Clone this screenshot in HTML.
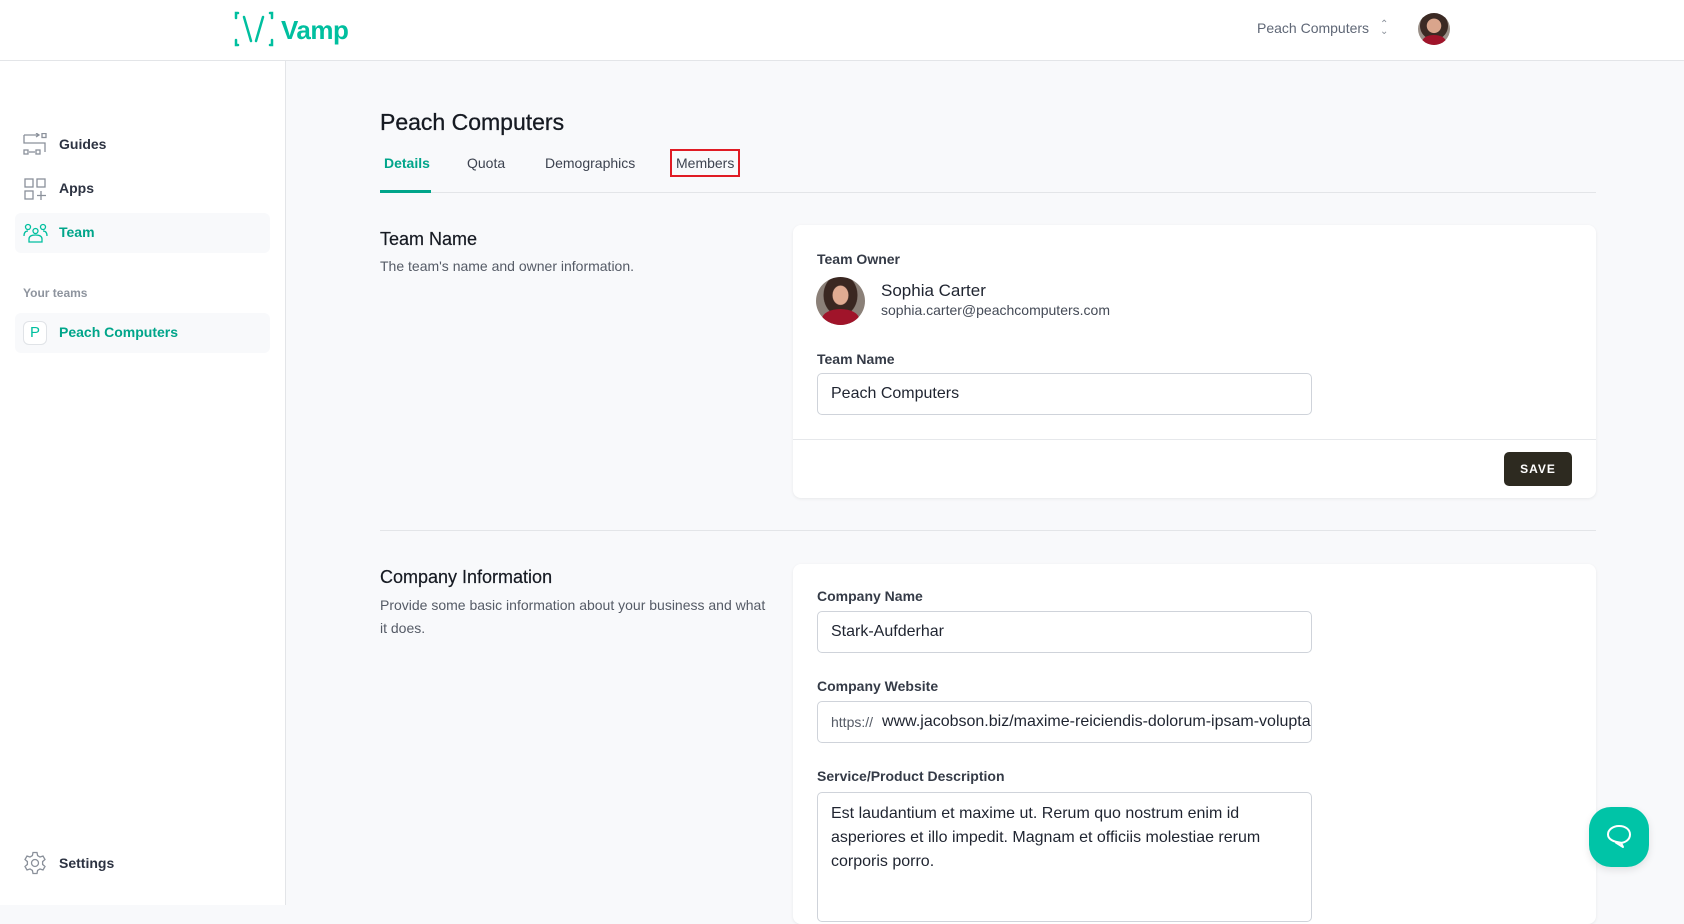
<!DOCTYPE html>
<html><head><meta charset="utf-8"><style>
*{box-sizing:border-box;margin:0;padding:0}
body{width:1684px;height:905px;overflow:hidden;background:#f8f9fb;font-family:"Liberation Sans",Arial,sans-serif;position:relative;color:#1f2430}
.a{position:absolute}
.hdr{left:0;top:0;width:1684px;height:61px;background:#fff;border-bottom:1px solid #e3e5e8}
.side{left:0;top:61px;width:286px;height:844px;background:#fff;border-right:1px solid #e3e5e8}
.nav{font-size:14px;font-weight:bold;color:#2d3342}
.card{background:#fff;border-radius:8px;box-shadow:0 1px 3px rgba(0,0,0,.07)}
.lbl{font-size:14px;font-weight:bold;color:#353b47}
.inp{background:#fff;border:1px solid #cfd3da;border-radius:5px;font-size:16px;color:#1f2430;padding-left:13px;display:flex;align-items:center}
.h2{font-size:18px;color:#161a22}
.desc{font-size:14px;color:#555b66;line-height:23px}
.tab{font-size:14px;color:#3d4350;top:155px}
</style></head><body>
<div class="a hdr"></div>
<svg class="a" style="left:234px;top:10px" width="40" height="38" viewBox="0 0 40 38" fill="none" stroke="#00bf9f" stroke-width="2.5" stroke-linecap="round">
<path d="M4 3H2V8M2 30V35H4M36 3H38V8M38 30V35H36"/><path d="M10 7L17 31M29 7L22 31"/></svg>
<div class="a" style="left:281px;top:15px;font-size:26px;font-weight:bold;color:#00bf9f;letter-spacing:-.5px">Vamp</div>
<div class="a" style="left:1257px;top:20px;font-size:14px;color:#5f6776">Peach Computers</div>
<div class="a" style="left:1380px;top:21px;font-size:10px;color:#8a909a;line-height:7px">⌃<br>⌄</div>
<div class="a" style="left:1418px;top:13px;width:32px;height:32px;border-radius:50%;background:radial-gradient(circle at 50% 40%,#d9a58c 0 28%,#3b2a24 30% 55%,#9a9088 57%);overflow:hidden"><div class="a" style="left:4px;top:22px;width:24px;height:14px;border-radius:50% 50% 0 0;background:#a0142a"></div></div>

<div class="a side"></div>
<svg class="a" style="left:23px;top:133px" width="25" height="24" viewBox="0 0 25 24" fill="none" stroke="#8a909a" stroke-width="1.3"><path d="M1 2H16M1 2V10H22V19M13 0L16 2L13 4"/><rect x="19" y="0.5" width="4" height="4"/><rect x="1" y="17" width="4" height="4"/><rect x="13" y="17" width="4" height="4"/><path d="M6 19H12"/></svg>
<div class="a nav" style="left:59px;top:136px">Guides</div>
<svg class="a" style="left:24px;top:178px" width="23" height="23" viewBox="0 0 23 23" fill="none" stroke="#8a909a" stroke-width="1.3"><rect x="1" y="1" width="8" height="8"/><rect x="13" y="1" width="8" height="8"/><rect x="1" y="13" width="8" height="8"/><path d="M17 13V22M13 17.5H22"/></svg>
<div class="a nav" style="left:59px;top:180px">Apps</div>
<div class="a" style="left:15px;top:213px;width:255px;height:40px;background:#f8f9fb;border-radius:6px"></div>
<svg class="a" style="left:23px;top:223px" width="25" height="20" viewBox="0 0 25 20" fill="none" stroke="#00bf9f" stroke-width="1.3"><circle cx="5" cy="4" r="2.5"/><circle cx="20" cy="4" r="2.5"/><circle cx="12.5" cy="8" r="2.5"/><path d="M1 13C1 9 3 8 5 8M24 13C24 9 22 8 20 8M6 19V16C6 13 9 12 12.5 12S19 13 19 16V19Z"/></svg>
<div class="a nav" style="left:59px;top:224px;color:#00a58a">Team</div>
<div class="a" style="left:23px;top:286px;font-size:12px;color:#8e949e;font-weight:bold">Your teams</div>
<div class="a" style="left:15px;top:313px;width:255px;height:40px;background:#f8f9fb;border-radius:6px"></div>
<div class="a" style="left:23px;top:321px;width:24px;height:24px;border:1px solid #e0e3e7;border-radius:6px;background:#fff;color:#00bf9f;font-size:15px;text-align:center;line-height:22px">P</div>
<div class="a nav" style="left:59px;top:324px;color:#00a58a">Peach Computers</div>
<svg class="a" style="left:23px;top:851px" width="24" height="24" viewBox="0 0 24 24" fill="none" stroke="#8a909a" stroke-width="1.3"><circle cx="12" cy="12" r="3.5"/><path d="M10 1.5H14L14.6 4.6L17 6L20 5L22 8.5L19.6 10.6V13.4L22 15.5L20 19L17 18L14.6 19.4L14 22.5H10L9.4 19.4L7 18L4 19L2 15.5L4.4 13.4V10.6L2 8.5L4 5L7 6L9.4 4.6Z"/></svg>
<div class="a nav" style="left:59px;top:855px">Settings</div>

<div class="a" style="left:380px;top:109px;font-size:23px;color:#161a22;-webkit-text-stroke:.3px #161a22">Peach Computers</div>
<div class="a tab" style="left:384px;color:#00a58a;font-weight:bold">Details</div>
<div class="a tab" style="left:467px">Quota</div>
<div class="a tab" style="left:545px">Demographics</div>
<div class="a tab" style="left:676px">Members</div>
<div class="a" style="left:670px;top:149px;width:70px;height:28px;border:2px solid #e01b24"></div>
<div class="a" style="left:380px;top:192px;width:1216px;height:1px;background:#e3e5e8"></div>
<div class="a" style="left:380px;top:190px;width:51px;height:3px;background:#00a58a"></div>

<div class="a h2" style="left:380px;top:229px;-webkit-text-stroke:.2px #161a22">Team Name</div>
<div class="a desc" style="left:380px;top:255px">The team's name and owner information.</div>
<div class="a card" style="left:793px;top:225px;width:803px;height:273px"></div>
<div class="a lbl" style="left:817px;top:251px">Team Owner</div>
<div class="a" style="left:816px;top:277px;width:49px;height:48px;border-radius:50%;overflow:hidden;background:radial-gradient(ellipse at 50% 38%,#e0ab92 0 22%,#3a2721 24% 48%,#8b8078 50%)"><div class="a" style="left:6px;top:32px;width:37px;height:20px;border-radius:50% 50% 0 0;background:#a0142a"></div></div>
<div class="a" style="left:881px;top:281px;font-size:17px;color:#1f2430">Sophia Carter</div>
<div class="a" style="left:881px;top:302px;font-size:14px;color:#444a56">sophia.carter@peachcomputers.com</div>
<div class="a lbl" style="left:817px;top:351px">Team Name</div>
<div class="a inp" style="left:817px;top:373px;width:495px;height:42px">Peach Computers</div>
<div class="a" style="left:793px;top:439px;width:803px;height:1px;background:#e6e8eb"></div>
<div class="a" style="left:1504px;top:452px;width:68px;height:34px;background:#2d2a20;border-radius:5px;color:#fff;font-size:12px;font-weight:bold;letter-spacing:1px;text-align:center;line-height:34px">SAVE</div>
<div class="a" style="left:380px;top:530px;width:1216px;height:1px;background:#e3e5e8"></div>

<div class="a h2" style="left:380px;top:567px;-webkit-text-stroke:.2px #161a22">Company Information</div>
<div class="a desc" style="left:380px;top:594px;width:392px">Provide some basic information about your business and what it does.</div>
<div class="a card" style="left:793px;top:564px;width:803px;height:360px"></div>
<div class="a lbl" style="left:817px;top:588px">Company Name</div>
<div class="a inp" style="left:817px;top:611px;width:495px;height:42px">Stark-Aufderhar</div>
<div class="a lbl" style="left:817px;top:678px">Company Website</div>
<div class="a inp" style="left:817px;top:701px;width:495px;height:42px;overflow:hidden;white-space:nowrap"><span style="font-size:14px;color:#555b66;margin-right:9px">https://</span>www.jacobson.biz/maxime-reiciendis-dolorum-ipsam-voluptas</div>
<div class="a lbl" style="left:817px;top:768px">Service/Product Description</div>
<div class="a inp" style="left:817px;top:792px;width:495px;height:130px;align-items:flex-start;padding-top:9px;line-height:24px;padding-right:20px">Est laudantium et maxime ut. Rerum quo nostrum enim id asperiores et illo impedit. Magnam et officiis molestiae rerum corporis porro.</div>

<div class="a" style="left:1589px;top:807px;width:60px;height:60px;border-radius:22px;background:#00c4a7;box-shadow:0 3px 8px rgba(0,0,0,.1)"></div>
<svg class="a" style="left:1605px;top:823px" width="28" height="28" viewBox="0 0 28 28" fill="none" stroke="#fff" stroke-width="2" stroke-linejoin="round"><path d="M14 3C20.5 3 25 6.5 25 11.5S20.5 20 14 20C13 20 12 19.9 11 19.7L18 24L16 19.7C8 19 3 16 3 11.5S7.5 3 14 3Z"/></svg>
</body></html>
